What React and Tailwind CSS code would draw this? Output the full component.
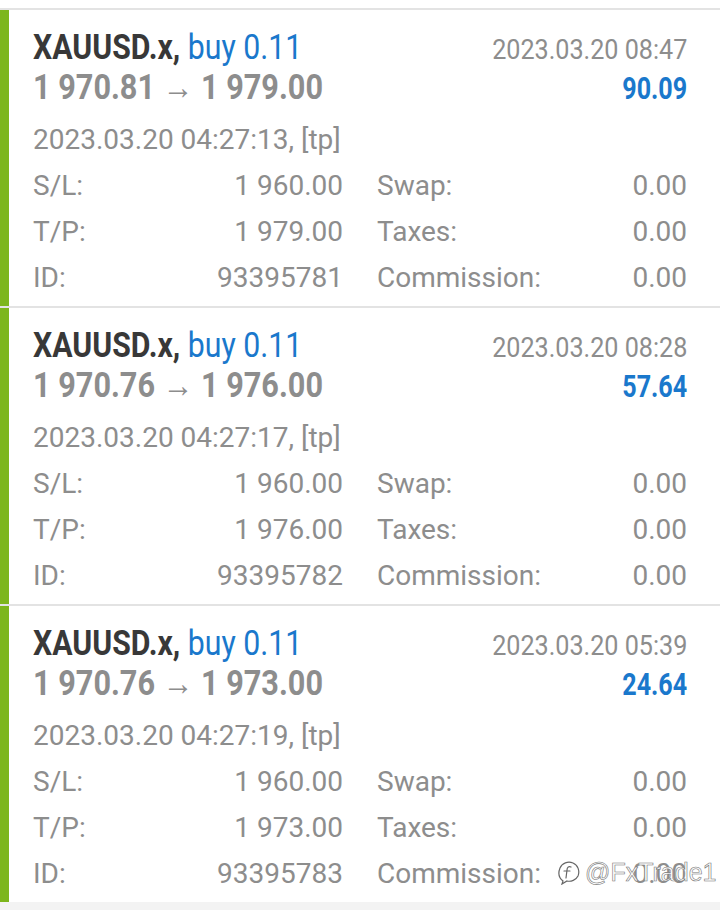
import React from "react";

const trades = [
  { open: "1 970.81", close: "1 979.00", time: "2023.03.20 08:47", profit: "90.09", opened: "2023.03.20 04:27:13, [tp]", sl: "1 960.00", tp: "1 979.00", id: "93395781" },
  { open: "1 970.76", close: "1 976.00", time: "2023.03.20 08:28", profit: "57.64", opened: "2023.03.20 04:27:17, [tp]", sl: "1 960.00", tp: "1 976.00", id: "93395782" },
  { open: "1 970.76", close: "1 973.00", time: "2023.03.20 05:39", profit: "24.64", opened: "2023.03.20 04:27:19, [tp]", sl: "1 960.00", tp: "1 973.00", id: "93395783" },
];

function Row({ l1, v1, l2, v2 }) {
  return (
    <div className="grid grid-cols-2 gap-x-[34px] h-[46px] items-center text-[28px] text-[#8d8d8d]">
      <div className="flex justify-between">
        <span>{l1}</span>
        <span>{v1}</span>
      </div>
      <div className="flex justify-between">
        <span>{l2}</span>
        <span>{v2}</span>
      </div>
    </div>
  );
}

function Card({ t }) {
  return (
    <div className="flex h-[296px] bg-white">
      <div className="w-[9px] bg-[#7db61c]" />
      <div className="flex-1 pl-[24px] pr-[33px] pt-[18px]">
        <div className="flex justify-between items-baseline h-[40px] leading-[40px]">
          <span className="inline-block origin-left scale-x-[0.864] text-[35px] font-bold text-[#383838] whitespace-nowrap">
            XAUUSD.x, <span className="font-normal text-[#1a78cc]">buy 0.11</span>
          </span>
          <span className="inline-block origin-right scale-x-[0.898] text-[28px] text-[#8d8d8d] whitespace-nowrap">{t.time}</span>
        </div>
        <div className="flex justify-between items-baseline h-[40px] leading-[40px]">
          <span className="inline-block origin-left scale-x-[0.876] text-[35px] font-bold text-[#8d8d8d] whitespace-nowrap">
            {t.open} <span className="font-normal">→</span> {t.close}
          </span>
          <span className="inline-block origin-right scale-x-[0.81] text-[31px] font-bold text-[#1a78cc]">{t.profit}</span>
        </div>
        <div className="mt-[9px] h-[46px] flex items-center text-[28px] text-[#8d8d8d]">{t.opened}</div>
        <Row l1="S/L:" v1={t.sl} l2="Swap:" v2="0.00" />
        <Row l1="T/P:" v1={t.tp} l2="Taxes:" v2="0.00" />
        <Row l1="ID:" v1={t.id} l2="Commission:" v2="0.00" />
      </div>
    </div>
  );
}

export default function App() {
  return (
    <div className="relative w-[720px] h-[910px] bg-[#f3f3f3] font-['Roboto',sans-serif] overflow-hidden">
      <div className="h-[8px] bg-white" />
      <div className="h-[2px] bg-[#e3e3e3]" />
      <Card t={trades[0]} />
      <div className="h-[2px] bg-[#e3e3e3]" />
      <Card t={trades[1]} />
      <div className="h-[2px] bg-[#e3e3e3]" />
      <Card t={trades[2]} />
      <div className="absolute left-[557px] top-[859px] flex items-center gap-[4px]">
        <svg width="24" height="26" viewBox="0 0 24 26" fill="none" stroke="#666" strokeWidth="1.2" strokeLinecap="round">
          <path d="M6 22 C2 19 1 14 3 9 C5 4 11 2 16 4 C21 6 23 12 21 17 C19 21 14 23 10 22 L5 25 Z" fill="white" />
          <path d="M14 8 C12 7 10 8 10 11 L9 19 M7 12 L13 12" />
        </svg>
        <span className="text-[25px] leading-none text-white font-['Liberation_Sans',sans-serif] [-webkit-text-stroke:0.6px_#777]">@FxTrade1</span>
      </div>
    </div>
  );
}
